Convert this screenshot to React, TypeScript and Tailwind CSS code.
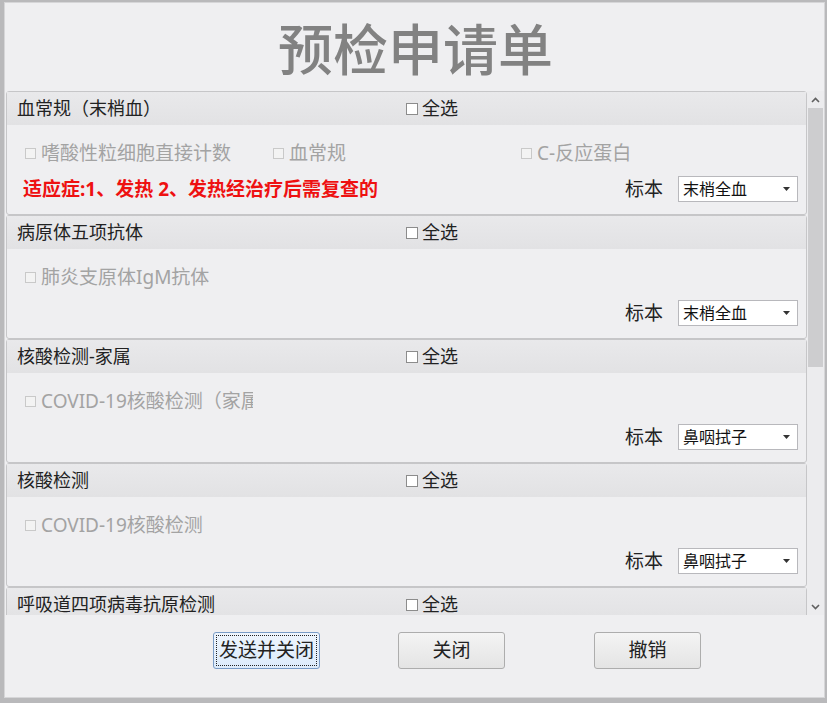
const font = "font-['Noto_Sans','Noto_Sans_CJK_SC',sans-serif]";

type Group = {
  title: string;
  items: string[];
  note?: string;
  sample: string;
};

const groups: Group[] = [
  {
    title: "血常规（末梢血）",
    items: ["嗜酸性粒细胞直接计数", "血常规", "C-反应蛋白"],
    note: "适应症:1、发热 2、发热经治疗后需复查的",
    sample: "末梢全血"
  },
  { title: "病原体五项抗体", items: ["肺炎支原体IgM抗体"], sample: "末梢全血" },
  { title: "核酸检测-家属", items: ["COVID-19核酸检测（家属）"], sample: "鼻咽拭子" },
  { title: "核酸检测", items: ["COVID-19核酸检测"], sample: "鼻咽拭子" },
  { title: "呼吸道四项病毒抗原检测", items: [], sample: "鼻咽拭子" }
];

function Box({ dim }: { dim?: boolean }) {
  return (
    <span
      className={
        dim
          ? "inline-block size-[11px] shrink-0 border border-[#c9c9c9] bg-[#f3f3f3]"
          : "inline-block size-[12px] shrink-0 border border-[#8c8c8c] bg-white"
      }
    />
  );
}

function Panel({ g }: { g: Group }) {
  return (
    <div className="h-[124px] shrink-0 rounded-[3px] border border-[#c6c6c8] bg-[#efeff1]">
      {/* header */}
      <div className="flex h-[33px] items-center bg-gradient-to-b from-[#e9e9eb] to-[#e2e2e4] pl-[10px] text-[18px] text-[#222]">
        <span className="w-[389px]">{g.title}</span>
        <span className="flex items-center gap-[4px]">
          <Box />
          <span>全选</span>
        </span>
      </div>
      {/* body */}
      <div className="pl-[18px] pr-[8px] pt-[17px]">
        <div className="flex h-[22px] items-center">
          {g.items.map((it, i) => (
            <div key={i} className="flex w-[248px] items-center">
              <div className="flex w-[228px] items-center gap-[5px] overflow-hidden whitespace-nowrap text-[19px] text-[#a3a3a3]">
                <Box dim />
                <span>{it}</span>
              </div>
            </div>
          ))}
        </div>
        <div className="mt-[12px] flex h-[26px] items-center">
          <span className="ml-[-2px] grow text-[19px] font-bold text-[#ee1111]">{g.note}</span>
          <span className="mr-[15px] text-[19px] text-[#222]">标本</span>
          <div className="flex h-[26px] w-[120px] items-center justify-between border border-[#b8b8bc] bg-white pl-[4px] pr-[7px] text-[16px] text-[#111]">
            <span>{g.sample}</span>
            <svg width="7" height="4" viewBox="0 0 7 4">
              <path d="M0 0h7L3.5 4z" fill="#333" />
            </svg>
          </div>
        </div>
      </div>
    </div>
  );
}

function Btn({ label, focus }: { label: string; focus?: boolean }) {
  return (
    <button
      className={
        "flex h-[37px] w-[107px] items-center justify-center rounded-[3px] border text-[19px] text-[#222] " +
        (focus
          ? "border-[#7a9cc6] bg-gradient-to-b from-[#eef5fd] to-[#dcebfb]"
          : "border-[#adadad] bg-gradient-to-b from-[#f4f4f4] to-[#e4e4e4]")
      }
    >
      <span
        className={
          "flex h-[31px] w-[101px] items-center justify-center whitespace-nowrap " +
          (focus ? "border border-dotted border-[#222]" : "")
        }
      >
        {label}
      </span>
    </button>
  );
}

export default function App() {
  return (
    <div className={`${font} h-[703px] w-[827px] bg-[#b9b9bb] pb-[5px] pl-[4px] pr-[2px] pt-[2px]`}>
      <div className="flex h-full flex-col border border-[#d6d6d8] bg-[#efeff1]">
        {/* title */}
        <div className="flex h-[88px] shrink-0 items-center justify-center pl-[2px] pt-[8px]">
          <h1 className="font-['Liberation_Serif','Noto_Sans_CJK_SC',serif] text-[55px] font-medium leading-none text-[#828282]">
            预检申请单
          </h1>
        </div>

        {/* scroll area */}
        <div className="flex h-[524px] shrink-0">
          <div className="flex w-[803px] flex-col overflow-hidden pl-[1px]">
            {groups.map((g, i) => (
              <Panel key={i} g={g} />
            ))}
          </div>
          <div className="flex w-[17px] flex-col items-center bg-[#ececee]">
            <div className="flex h-[17px] items-center justify-center">
              <svg width="9" height="6" viewBox="0 0 9 6">
                <path d="M1 5l3.5-3.5L8 5" stroke="#606060" strokeWidth="1.6" fill="none" />
              </svg>
            </div>
            <div className="h-[259px] w-[15px] bg-[#cdcdcf]" />
            <div className="grow" />
            <div className="flex h-[17px] items-center justify-center">
              <svg width="9" height="6" viewBox="0 0 9 6">
                <path d="M1 1l3.5 3.5L8 1" stroke="#606060" strokeWidth="1.6" fill="none" />
              </svg>
            </div>
          </div>
        </div>

        {/* buttons */}
        <div className="flex grow items-start pl-[208px] pt-[17px]">
          <Btn label="发送并关闭" focus />
          <div className="w-[78px]" />
          <Btn label="关闭" />
          <div className="w-[89px]" />
          <Btn label="撤销" />
        </div>
      </div>
    </div>
  );
}
